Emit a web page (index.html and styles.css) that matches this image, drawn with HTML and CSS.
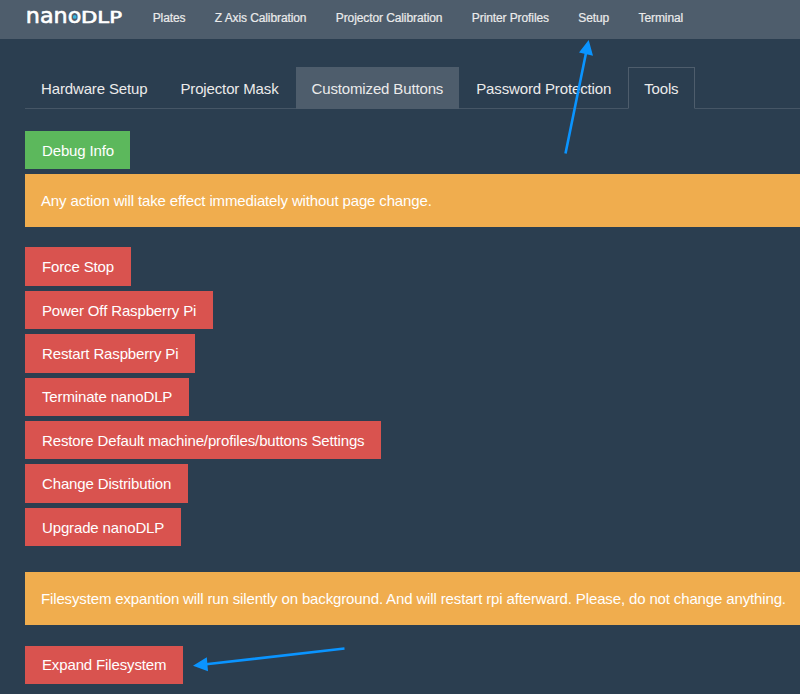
FILE: index.html
```html
<!DOCTYPE html>
<html lang="en">
<head>
<meta charset="utf-8">
<title>nanoDLP</title>
<link rel="stylesheet" href="styles.css">
</head>
<body>
<header class="navbar">
  <a class="brand">
    <svg width="104" height="28" viewBox="0 0 104 28" role="img" aria-label="nanoDLP">
      <text class="brand-lower" x="3.800" y="18.5" textLength="55.500" lengthAdjust="spacingAndGlyphs">nano</text>
      <text class="brand-upper" x="59" y="18.5" textLength="41" lengthAdjust="spacingAndGlyphs">DLP</text>
      <circle class="brand-dot" cx="52.700" cy="12.9" r="1.9"/>
    </svg>
  </a>
  <nav class="menu">
    <a>Plates</a><a>Z Axis Calibration</a><a>Projector Calibration</a><a>Printer Profiles</a><a>Setup</a><a>Terminal</a>
  </nav>
</header>
<main class="content">
  <ul class="tabs">
    <li class="tab">Hardware Setup</li>
    <li class="tab">Projector Mask</li>
    <li class="tab hover">Customized Buttons</li>
    <li class="tab">Password Protection</li>
    <li class="tab active">Tools</li>
  </ul>
  <a class="btn success">Debug Info</a>
  <div class="alert">Any action will take effect immediately without page change.</div>
  <div class="actions">
    <a class="btn">Force Stop</a>
    <a class="btn">Power Off Raspberry Pi</a>
    <a class="btn">Restart Raspberry Pi</a>
    <a class="btn">Terminate nanoDLP</a>
    <a class="btn">Restore Default machine/profiles/buttons Settings</a>
    <a class="btn">Change Distribution</a>
    <a class="btn">Upgrade nanoDLP</a>
  </div>
  <div class="alert">Filesystem expantion will run silently on background. And will restart rpi afterward. Please, do not change anything.</div>
  <a class="btn">Expand Filesystem</a>
</main>
<svg class="arrows" width="800" height="694" viewBox="0 0 800 694" aria-hidden="true">
  <path class="shaft" d="M565.5 153.500L586 53M344.500 648.500L206 664.300"/>
  <path class="head" d="M588.700 40L579 52.500L593 55.800ZM193 665.800L206.800 657.200L208 671.300Z"/>
</svg>
</body>
</html>
```
FILE: styles.css
```css
* { box-sizing: border-box; }
body {
  margin: 0;
  height: 694px;
  overflow: hidden;
  background: #2b3e50;
  color: #ebebeb;
  font: 15px/21px "Liberation Sans", Arial, sans-serif;
  letter-spacing: -.14px;
}
.navbar {
  display: flex;
  height: 39px;
  padding-left: 22px;
  background: #4e5d6c;
}
.brand { width: 104px; padding-top: 4px; letter-spacing: 0; }
.brand svg { display: block; }
.brand text {
  font-family: "DejaVu Sans", sans-serif;
  fill: #fff;
  stroke: #fff;
  stroke-width: .6px;
}
.brand-lower { font-size: 20.5px; }
.brand-upper { font-size: 15.5px; }
.brand-dot { fill: #36b5dc; }
.menu {
  display: flex;
  gap: 29.4px;
  padding-left: 26.700px;
  font-size: 12px;
  line-height: 36px;
  letter-spacing: -.1px;
  -webkit-text-stroke: .2px #ebebeb;
  white-space: nowrap;
}
.content { padding: 28px 0 0 25px; }
.tabs {
  display: flex;
  height: 42px;
  margin: 0 0 22px;
  padding: 0;
  list-style: none;
  border-bottom: 1px solid #465666;
}
.tab {
  height: 42px;
  margin-right: 1px;
  padding: 10px 15px;
  border: 1px solid transparent;
  white-space: nowrap;
}
.tab.hover { background: #4e5d6c; border-color: #4e5d6c; }
.tab.active {
  padding-right: 16px;
  background: #2b3e50;
  border-color: #4e5d6c #4e5d6c transparent;
}
.btn {
  display: block;
  width: fit-content;
  height: 38.400px;
  padding: 8.800px 17px;
  background: #d9534f;
  color: #fff;
  white-space: nowrap;
}
.btn.success { padding-right: 16px; background: #5cb85c; }
.alert {
  height: 53px;
  margin: 4.600px 0 20.500px;
  padding: 16px;
  background: #f0ad4e;
  color: #fff;
  white-space: nowrap;
}
.actions {
  display: grid;
  gap: 5px;
  margin-bottom: 25.800px;
}
.arrows { position: absolute; top: 0; left: 0; pointer-events: none; }
.shaft { fill: none; stroke: #0a94ff; stroke-width: 2.600px; }
.head { fill: #0a94ff; }
```
